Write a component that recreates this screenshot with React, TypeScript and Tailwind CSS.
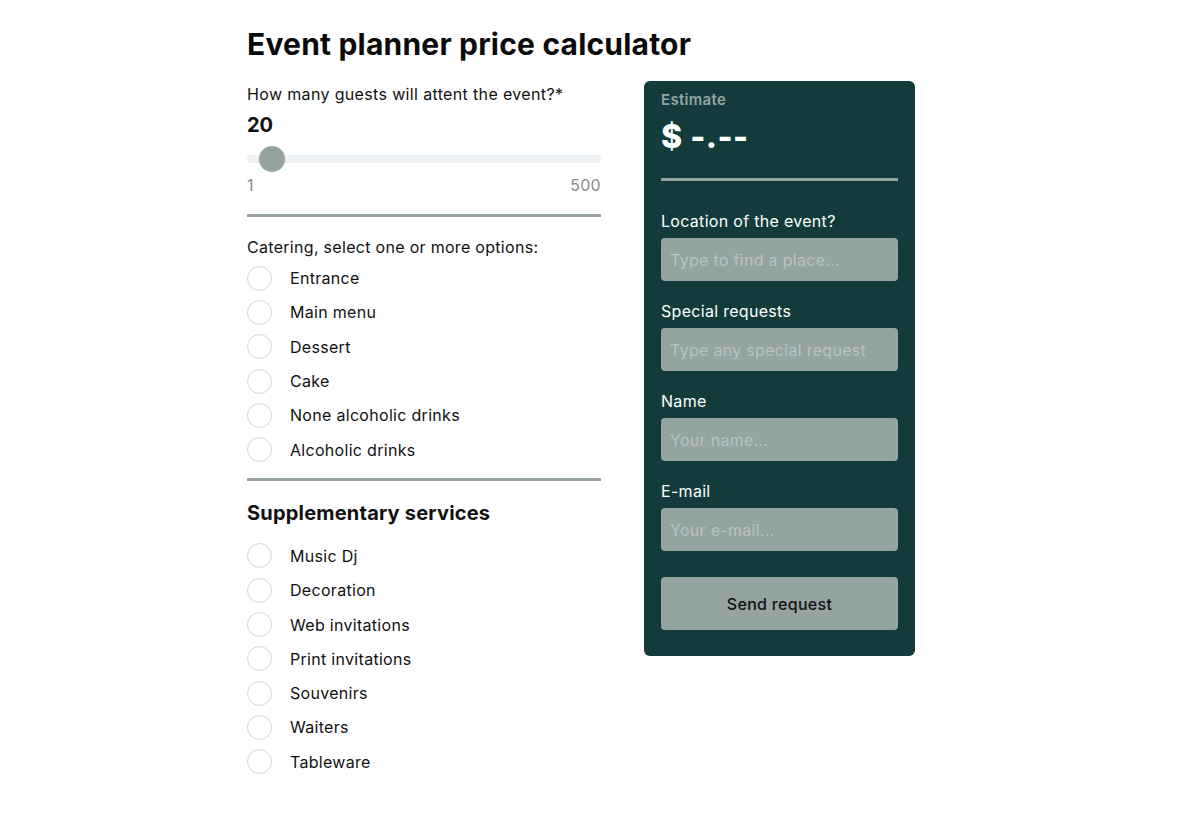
import React from "react";

const catering = ["Entrance", "Main menu", "Dessert", "Cake", "None alcoholic drinks", "Alcoholic drinks"];
const services = ["Music Dj", "Decoration", "Web invitations", "Print invitations", "Souvenirs", "Waiters", "Tableware"];

function Option({ label }: { label: string }) {
  return (
    <label className="flex items-center h-[34.3px] gap-[18px] text-[16px] text-[#111] tracking-[0.3px]">
      <span className="w-[25px] h-[25px] rounded-full border border-[#d4d4d4] bg-white shrink-0" />
      <span>{label}</span>
    </label>
  );
}

function Field({ label, placeholder }: { label: string; placeholder: string }) {
  return (
    <div className="flex flex-col">
      <div className="text-white text-[16px] leading-[20px] mb-[7px] tracking-[0.3px]">{label}</div>
      <input
        placeholder={placeholder}
        className="h-[43px] w-full rounded-[4px] bg-[#95a3a1] px-[9px] text-[16px] tracking-[0.3px] text-[#111] placeholder:text-[#b8c3c1] outline-none"
      />
    </div>
  );
}

export default function App() {
  return (
    <div className="min-h-screen bg-white" style={{ fontFamily: "Inter, 'Noto Sans', sans-serif" }}>
      <div className="w-[668px] ml-[247px] pt-[26px]">
        <h1 className="text-[30px] font-bold leading-[36px] text-[#0a0a0a] tracking-[0.2px]">Event planner price calculator</h1>
        <div className="flex gap-[43px] mt-[19px] items-start">
          <div className="w-[354px] flex flex-col">
            <div className="text-[16px] leading-[20px] text-[#111] mt-[3px] tracking-[0.35px]">How many guests will attent the event?*</div>
            <div className="text-[20px] font-bold leading-[24px] mt-[9px] text-[#111]">20</div>
            <div className="relative h-[26px] mt-[9px]">
              <div className="absolute left-0 right-0 top-[9px] h-[8px] rounded-full bg-[#edf2f6]" />
              <div className="absolute left-[12px] top-0 w-[26px] h-[26px] rounded-full bg-[#95a3a1]" />
            </div>
            <div className="flex justify-between text-[16px] leading-[20px] text-[#8a8a8a] mt-[3px] tracking-[0.3px]">
              <span>1</span>
              <span>500</span>
            </div>
            <div className="h-[3px] bg-[#95a3a1] mt-[19px]" />
            <div className="text-[16px] leading-[20px] text-[#111] mt-[20px] tracking-[0.3px]">Catering, select one or more options:</div>
            <div className="flex flex-col mt-[4px]">
              {catering.map((c) => (
                <Option key={c} label={c} />
              ))}
            </div>
            <div className="h-[3px] bg-[#95a3a1] mt-[11px]" />
            <div className="text-[20px] font-bold leading-[24px] text-[#111] mt-[20px] tracking-[0.2px]">Supplementary services</div>
            <div className="flex flex-col mt-[14px]">
              {services.map((c) => (
                <Option key={c} label={c} />
              ))}
            </div>
          </div>
          <div className="w-[271px] bg-[#133b3c] rounded-[6px] px-[17px] pt-[9px] pb-[26px] flex flex-col">
            <div className="text-[15px] font-semibold text-[#95a3a1] leading-[20px] tracking-[0.3px]">Estimate</div>
            <div className="text-[32px] font-extrabold text-white leading-[38px] mt-[8px] tracking-[0.5px]">$ -.--</div>
            <div className="h-[3px] bg-[#95a3a1] mt-[22px]" />
            <div className="flex flex-col gap-[20px] mt-[30px]">
              <Field label="Location of the event?" placeholder="Type to find a place..." />
              <Field label="Special requests" placeholder="Type any special request" />
              <Field label="Name" placeholder="Your name..." />
              <Field label="E-mail" placeholder="Your e-mail..." />
            </div>
            <button className="mt-[26px] h-[53px] w-full rounded-[4px] bg-[#95a3a1] text-[16px] font-medium text-[#111] tracking-[0.3px]">
              Send request
            </button>
          </div>
        </div>
      </div>
    </div>
  );
}
